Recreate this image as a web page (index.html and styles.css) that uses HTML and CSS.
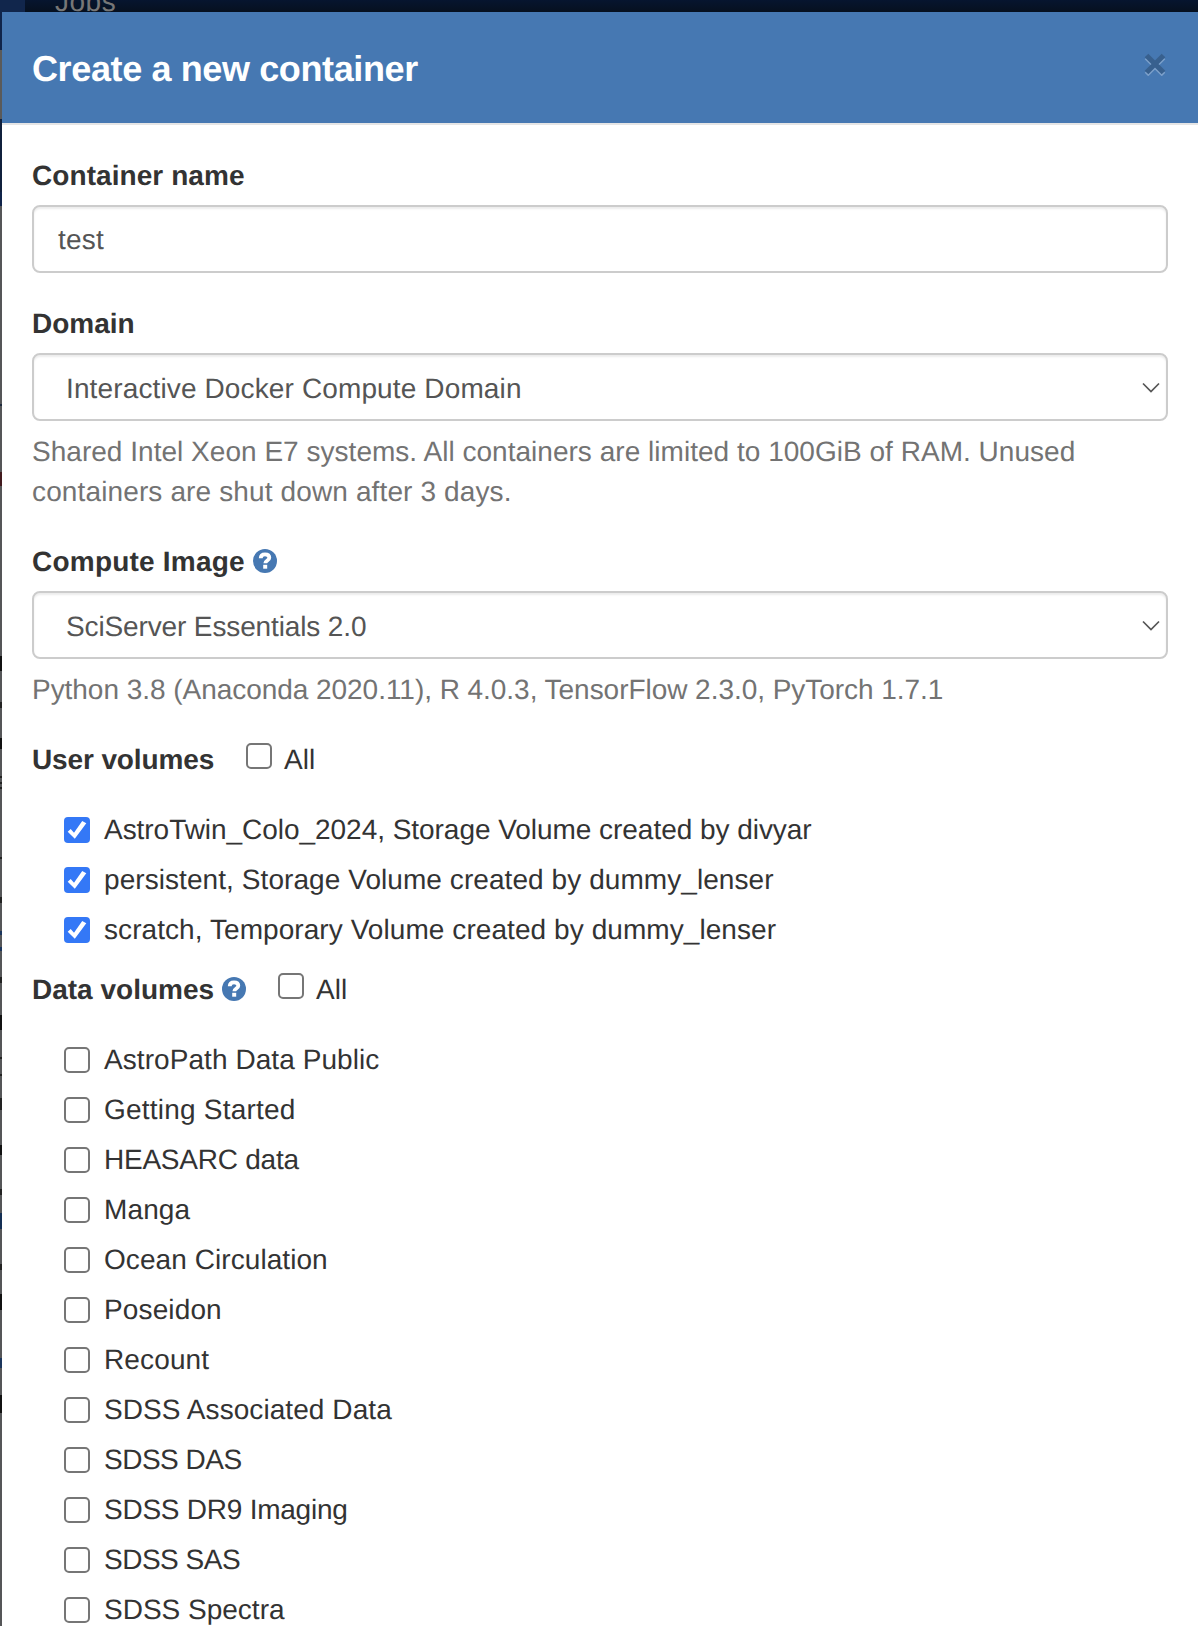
FILE: index.html
```html
<!DOCTYPE html>
<html lang="en">
<head>
<meta charset="utf-8">
<title>Create a new container</title>
<link rel="stylesheet" href="styles.css">
</head>
<body>
<svg class="sprite" aria-hidden="true">
  <symbol id="help" viewBox="0 0 24 24">
    <circle cx="12" cy="12" r="12" fill="#4678b2"/>
    <path d="M7.700 9.200C7.800 6.200 9.600 5.300 12 5.300c2.600 0 4.300 1.300 4.300 3.400 0 2.700-4 2.800-4 5.500" fill="none" stroke="#fff" stroke-width="3.800"/>
    <path d="M10.200 15.800h4v3.900h-4z" fill="#fff"/>
  </symbol>
  <symbol id="chevron" viewBox="0 0 18 11">
    <path d="M1 1.500l8 8 8-8" fill="none" stroke="#555" stroke-width="1.700"/>
  </symbol>
</svg>
<div class="page">
  <nav class="backdrop-nav"><span class="nav-item">Jobs</span></nav>
  <div class="modal">
    <header class="modal-header">
      <h4 class="modal-title">Create a new container</h4>
      <button class="close" aria-label="Close"><svg width="22" height="23" viewBox="0 0 22 23"><path d="M2.500 4.500l17 17M19.500 4.500l-17 17" stroke="#7da1cb" stroke-width="5"/><path d="M2.500 2.500l17 17M19.500 2.500l-17 17" stroke="#38608e" stroke-width="5.200"/></svg></button>
    </header>
    <div class="modal-body">
      <div class="group">
        <div class="label"><span class="ls-1">Container name</span></div>
        <div class="control control-input"><span class="ls-3">test</span></div>
      </div>
      <div class="group">
        <div class="label"><span>Domain</span></div>
        <div class="control control-select"><span class="ls-2">Interactive Docker Compute Domain</span><svg class="chevron"><use href="#chevron"/></svg></div>
        <p class="help-text"><span class="ls-0">Shared Intel Xeon E7 systems. All containers are limited to 100GiB of RAM. Unused</span><br><span class="ls-2">containers are shut down after 3 days.</span></p>
      </div>
      <div class="group">
        <div class="label"><span class="ls-3">Compute Image</span><svg class="help"><use href="#help"/></svg></div>
        <div class="control control-select"><span class="ls-n2">SciServer Essentials 2.0</span><svg class="chevron"><use href="#chevron"/></svg></div>
        <p class="help-text"><span class="ls-n0">Python 3.8 (Anaconda 2020.11), R 4.0.3, TensorFlow 2.3.0, PyTorch 1.7.1</span></p>
      </div>
      <div class="volumes">
        <div class="label"><span class="ls-n2">User volumes</span><label class="all"><input type="checkbox" class="box"><span>All</span></label></div>
        <div class="list">
          <label class="row"><input type="checkbox" class="box" checked><span class="ls-n0">AstroTwin_Colo_2024, Storage Volume created by divyar</span></label>
          <label class="row"><input type="checkbox" class="box" checked><span class="ls-1">persistent, Storage Volume created by dummy_lenser</span></label>
          <label class="row"><input type="checkbox" class="box" checked><span class="ls-1">scratch, Temporary Volume created by dummy_lenser</span></label>
        </div>
      </div>
      <div class="volumes">
        <div class="label"><span>Data volumes</span><svg class="help"><use href="#help"/></svg><label class="all"><input type="checkbox" class="box"><span>All</span></label></div>
        <div class="list">
          <label class="row"><input type="checkbox" class="box"><span class="ls-1">AstroPath Data Public</span></label>
          <label class="row"><input type="checkbox" class="box"><span class="ls-3">Getting Started</span></label>
          <label class="row"><input type="checkbox" class="box"><span class="ls-n3">HEASARC data</span></label>
          <label class="row"><input type="checkbox" class="box"><span class="ls-2">Manga</span></label>
          <label class="row"><input type="checkbox" class="box"><span class="ls-1">Ocean Circulation</span></label>
          <label class="row"><input type="checkbox" class="box"><span class="ls-2">Poseidon</span></label>
          <label class="row"><input type="checkbox" class="box"><span class="ls-2">Recount</span></label>
          <label class="row"><input type="checkbox" class="box"><span class="ls-1">SDSS Associated Data</span></label>
          <label class="row"><input type="checkbox" class="box"><span class="ls-n5">SDSS DAS</span></label>
          <label class="row"><input type="checkbox" class="box"><span class="ls-n3">SDSS DR9 Imaging</span></label>
          <label class="row"><input type="checkbox" class="box"><span class="ls-n5">SDSS SAS</span></label>
          <label class="row"><input type="checkbox" class="box"><span>SDSS Spectra</span></label>
        </div>
      </div>
    </div>
  </div>
</div>
</body>
</html>
```
FILE: styles.css
```css
* { box-sizing: border-box; }
body {
  margin: 0;
  height: 1626px;
  overflow: hidden;
  font: 28px/40px "Liberation Sans", Arial, sans-serif;
  text-rendering: geometricPrecision;
  color: #333;
}
.sprite { display: none; }
/* dimmed page behind the dialog; only a 2px sliver of it shows on the left */
.page {
  height: 1626px;
  overflow: hidden;
  background: linear-gradient(#10244a 0 50px, #5a5a5a 50px 119px, #10203c 119px 192px, #10244a 192px 206px, #555658 206px 404px, #1e2a3c 404px 406px, #555658 406px 472px, #421a1e 472px 486px, #555658 486px 656px, #111 656px 671px, #555658 671px 702px, #222 702px 708px, #555658 708px 738px, #111 738px 749px, #555658 749px 776px, #222 776px 778px, #555658 778px 782px, #222 782px 784px, #555658 784px 787px, #222 787px 789px, #555658 789px 857px, #222 857px 859px, #555658 859px 897px, #222 897px 903px, #555658 903px 931px, #1b355c 931px 935px, #555658 935px 947px, #1b355c 947px 951px, #555658 951px 977px, #222 977px 983px, #555658 983px 1015px, #111 1015px 1030px, #555658 1030px 1057px, #222 1057px 1059px, #555658 1059px 1074px, #222 1074px 1076px, #555658 1076px 1098px, #222 1098px 1110px, #555658 1110px 1145px, #111 1145px 1155px, #555658 1155px 1189px, #222 1189px 1195px, #555658 1195px 1213px, #142f54 1213px 1229px, #555658 1229px 1264px, #222 1264px 1270px, #555658 1270px 1294px, #111 1294px 1310px, #555658 1310px 1358px, #1b355c 1358px 1368px, #555658 1368px 1395px, #111 1395px 1413px, #555658 1413px);
}
.backdrop-nav {
  height: 12px;
  display: flex;
  align-items: flex-end;
  border-left: 25px solid #11264c;
  background: linear-gradient(#06152f, #06101f);
}
.nav-item {
  margin-left: 30px;
  line-height: 32px;
  height: 26px;
  letter-spacing: .5px;
  color: #777;
}
.modal { margin-left: 2px; background: #fff; min-height: 1614px; }
.modal-header {
  height: 113px;
  padding: 30px;
  display: flex;
  justify-content: space-between;
  background: #4678b2;
  border-bottom: 2px solid #e5e5e5;
}
.modal-title { margin: 0; font-size: 36px; line-height: 53px; letter-spacing: -.38px; color: #fff; }
.close { margin: 11px 2px 0 0; padding: 0; border: 0; background: none; height: 23px; display: flex; }
.modal-body { padding: 30px; }
.group { margin-bottom: 30px; }
.label { display: flex; align-items: center; height: 40px; font-weight: bold; }
.label > span, .all > span, .row > span, .control > span { padding-top: 2px; }
.control {
  height: 68px;
  margin-top: 10px;
  padding-left: 24px;
  display: flex;
  align-items: center;
  justify-content: space-between;
  border: 2px solid #ccc;
  border-radius: 8px;
  box-shadow: inset 0 2px 2px rgba(0, 0, 0, .075);
  color: #555;
}
.control-select { padding: 0 6px 0 32px; }
.control-select > span { padding-top: 4px; }
.chevron { width: 18px; height: 11px; }
.help-text { margin: 0; padding-top: 11px; height: 50px; color: #737373; white-space: nowrap; }
.help-text:has(br) { height: 90px; }
.help { width: 24px; height: 24px; margin-left: 8px; }
.all { display: flex; align-items: center; margin-left: 32px; font-weight: normal; }
.all .box { margin: -6px 12px 0 0; }
.list { padding: 30px 0 20px 32px; display: flex; flex-direction: column; gap: 10px; }
.row { display: flex; align-items: center; height: 40px; white-space: nowrap; }
.box {
  appearance: none;
  flex: none;
  width: 26px;
  height: 26px;
  margin: 2px 14px 0 0;
  border: 2px solid #767676;
  border-radius: 5px;
  background: #fff;
}
.box:checked { border: 0; border-radius: 4px; background: #3478f6; display: grid; }
.box:checked::before {
  content: "";
  background: #fff;
  clip-path: polygon(3.700px 14.800px, 6.700px 12px, 10px 15.800px, 18.200px 4px, 22.300px 6.300px, 10.800px 21.800px);
}
/* tracking steps */
.ls-0 { letter-spacing: .026px; }
.ls-1 { letter-spacing: .07px; }
.ls-2 { letter-spacing: .13px; }
.ls-3 { letter-spacing: .22px; }
.ls-n0 { letter-spacing: -.04px; }
.ls-n2 { letter-spacing: -.13px; }
.ls-n3 { letter-spacing: -.24px; }
.ls-n5 { letter-spacing: -.5px; }
```
